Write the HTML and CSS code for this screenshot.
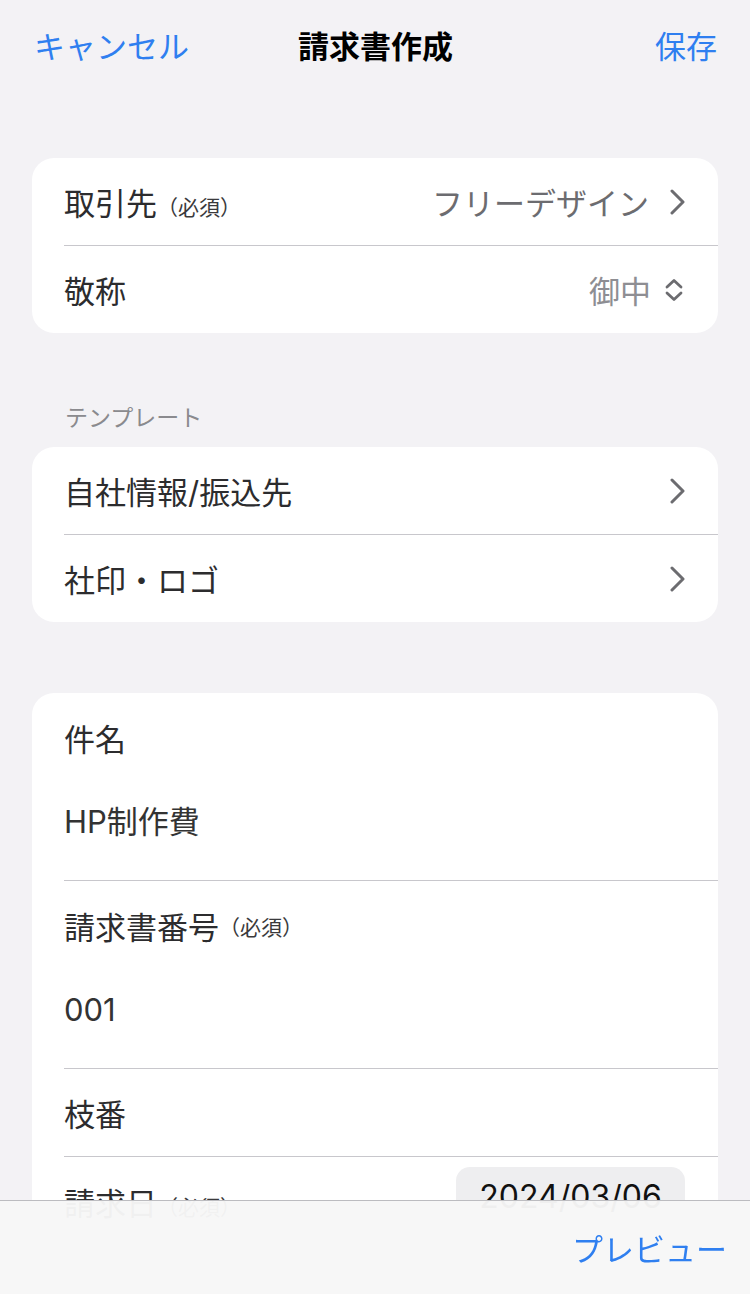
FILE: index.html
```html
<!DOCTYPE html>
<html>
	<head>
		<meta charset="utf-8">
		<link rel="stylesheet" href="styles.css">
	</head>
	<body>
		<div class="nav">
			<span class="nav-btn">キャンセル</span>
			<span class="nav-title">請求書作成</span>
			<span class="nav-btn nav-right">保存</span>
		</div>
		<div class="content">
			<div class="card">
				<div class="row">
					<span class="label">取引先<small>（必須）</small></span>
					<span class="value">フリーデザイン</span>
					<svg class="chevron" viewBox="0 0 16 28"><path d="M3 3 L14 14 L3 25"/></svg>
				</div>
				<div class="row">
					<span class="label">敬称</span>
					<span class="value light">御中</span>
					<svg class="updown" viewBox="0 0 22 26"><path d="M4 10 L11 3.5 L18 10 M4 16 L11 22.5 L18 16"/></svg>
				</div>
			</div>

			<div class="section-title">テンプレート</div>
			<div class="card">
				<div class="row">
					<span class="label">自社情報/振込先</span>
					<svg class="chevron" viewBox="0 0 16 28"><path d="M3 3 L14 14 L3 25"/></svg>
				</div>
				<div class="row">
					<span class="label">社印・ロゴ</span>
					<svg class="chevron" viewBox="0 0 16 28"><path d="M3 3 L14 14 L3 25"/></svg>
				</div>
			</div>

			<div class="card card-gap">
				<div class="field">
					<div class="field-label">件名</div>
					<div class="field-value">HP制作費</div>
				</div>
				<div class="field">
					<div class="field-label">請求書番号<small>（必須）</small></div>
					<div class="field-value">001</div>
				</div>
				<div class="row">
					<span class="label">枝番</span>
				</div>
				<div class="row row-date">
					<span class="label">請求日<small>（必須）</small></span>
					<span class="date-pill">2024/03/06</span>
				</div>
			</div>
		</div>
		<div class="toolbar">
			<span class="nav-btn">プレビュー</span>
		</div>
	</body>
</html>
```

FILE: styles.css
```css
*{
	margin: 0;
	padding: 0;
	box-sizing: border-box;
}
html,body{
	width: 100%;
	height: 100%;
}
body{
	background: #f3f2f5;
	font-family: "Inter", "Noto Sans CJK JP", sans-serif;
	color: #2c2c2e;
	overflow: hidden;
}
.nav{
	height: 88px;
	display: grid;
	grid-template-columns: 1fr auto 1fr;
	align-items: center;
	padding: 0 33px 0 34px;
}
.nav-btn{
	font-size: 31px;
	color: #2f7ff0;
}
.nav-right{
	justify-self: end;
}
.nav-title{
	font-size: 31px;
	font-weight: 700;
	color: #000;
}
.content{
	padding: 70px 32px 120px;
}
.card{
	background: #fff;
	border-radius: 22px;
	overflow: hidden;
}
.card-gap{
	margin-top: 71px;
}
.row{
	height: 87px;
	margin-left: 32px;
	padding-right: 33px;
	display: flex;
	align-items: center;
	font-size: 31px;
}
.row + .row,
.field + .row{
	border-top: 1px solid #c8c7cc;
	height: 88px;
}
.field + .field{
	border-top: 1px solid #c8c7cc;
}
.label{
	flex: 1;
	white-space: nowrap;
}
small{
	font-size: 21px;
	color: #3a3a3c;
}
.value{
	color: #6c6c70;
	margin-right: 20px;
}
.value.light{
	color: #8e8e93;
	margin-right: 12px;
}
.chevron{
	width: 16px;
	height: 28px;
	fill: none;
	stroke: #6c6c70;
	stroke-width: 3;
	stroke-linecap: round;
	stroke-linejoin: round;
}
.updown{
	width: 22px;
	height: 26px;
	fill: none;
	stroke: #6c6c70;
	stroke-width: 2.8;
	stroke-linecap: round;
	stroke-linejoin: round;
}
.section-title{
	margin-top: 70px;
	margin-bottom: 14px;
	padding-left: 33px;
	font-size: 23px;
	line-height: 30px;
	color: #8a8a8e;
}
.field{
	margin-left: 32px;
	padding-right: 33px;
	font-size: 31px;
}
.field-label{
	height: 89px;
	display: flex;
	align-items: center;
}
.field-value{
	padding: 20px 0 38px;
	line-height: 40px;
	color: #333;
}
.row-date{
	align-items: flex-start;
	padding-top: 10px;
}
.row-date .label{
	padding-top: 12px;
}
.date-pill{
	width: 229px;
	height: 58px;
	border-radius: 14px;
	background: #eeeef0;
	color: #111;
	font-size: 32px;
	display: flex;
	align-items: center;
	justify-content: center;
}
.toolbar{
	position: fixed;
	left: 0;
	right: 0;
	bottom: 0;
	height: 94px;
	background: rgba(247,247,247,0.97);
	border-top: 1px solid #bcbcc0;
	display: flex;
	align-items: center;
	justify-content: flex-end;
	padding-right: 23px;
}
```
